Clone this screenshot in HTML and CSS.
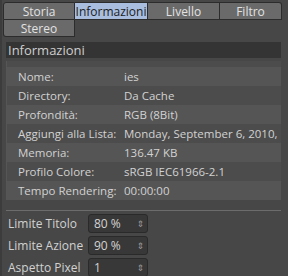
FILE: index.html
```html
<!DOCTYPE html>
<html lang="it">
<head>
    <meta charset="UTF-8">
    <title>Informazioni</title>
    <link rel="stylesheet" href="styles.css">
</head>
<body>

    <!-- Tab strip -->
    <div class="tabs">
        <div class="tab-row">
            <div class="tab first">Storia</div>
            <div class="tab active">Informazioni</div>
            <div class="tab">Livello</div>
            <div class="tab last">Filtro</div>
        </div>
        <div class="tab-row">
            <div class="tab first bottom">Stereo</div>
        </div>
    </div>

    <!-- Panel -->
    <div class="panel">
        <div class="panel-head">Informazioni</div>

        <div class="info">
            <div class="info-row"><span class="key">Nome:</span><span class="val">ies</span></div>
            <div class="info-row"><span class="key">Directory:</span><span class="val">Da Cache</span></div>
            <div class="info-row"><span class="key">Profondità:</span><span class="val">RGB (8Bit)</span></div>
            <div class="info-row"><span class="key">Aggiungi alla Lista:</span><span class="val">Monday, September 6, 2010,</span></div>
            <div class="info-row"><span class="key">Memoria:</span><span class="val">136.47 KB</span></div>
            <div class="info-row"><span class="key">Profilo Colore:</span><span class="val">sRGB IEC61966-2.1</span></div>
            <div class="info-row"><span class="key">Tempo Rendering:</span><span class="val">00:00:00</span></div>
        </div>

        <div class="sep"></div>

        <div class="fields">
            <div class="field">
                <span class="field-label">Limite Titolo</span>
                <div class="spin"><span>80 %</span><span class="arrows">&#8661;</span></div>
            </div>
            <div class="field">
                <span class="field-label">Limite Azione</span>
                <div class="spin"><span>90 %</span><span class="arrows">&#8661;</span></div>
            </div>
            <div class="field">
                <span class="field-label">Aspetto Pixel</span>
                <div class="spin"><span>1</span><span class="arrows">&#8661;</span></div>
            </div>
        </div>
    </div>

</body>
</html>
```

FILE: styles.css
```css
/* Reset */
* {
    margin: 0;
    padding: 0;
    box-sizing: border-box;
}

body {
    font-family: 'Open Sans', 'DejaVu Sans', sans-serif;
    font-size: 11.5px;
    color: #d2d2d2;
    background: #474747;
    border-left: 2px solid #3c3c3c;
    width: 288px;
    height: 276px;
    overflow: hidden;
    white-space: nowrap;
}

/* Tabs */
.tabs {
    padding: 2px 6px 0 1px;
}

.tab-row {
    display: grid;
    grid-template-columns: 72px 73px 72px 62px;
}

.tab {
    height: 18px;
    line-height: 17px;
    text-align: center;
    background: #6a6a6a;
    color: #e2e2e2;
    border: 1px solid #2c2c2c;
    border-left: none;
    font-size: 12px;
}

.tab.first {
    border-left: 1px solid #2c2c2c;
    border-top-left-radius: 3px;
}

.tab.last {
    border-top-right-radius: 3px;
}

.tab.bottom {
    border-top: none;
    border-radius: 0 0 0 3px;
    height: 17px;
}

.tab.active {
    background: #a9bedf;
    color: #1c1c1c;
}

/* Panel */
.panel {
    margin: 5px 7px 0 4px;
}

.panel-head {
    background: #343434;
    height: 16px;
    line-height: 16px;
    padding-left: 2px;
    font-size: 13px;
    color: #cfcfcf;
}

.info {
    margin-top: 3px;
    padding-top: 6px;
    background: #4c4c4c;
    border-left: 1px solid #565656;
    overflow: hidden;
}

.info-row {
    display: flex;
    height: 19px;
    line-height: 19px;
}

.info-row:nth-child(odd) {
    background: #555555;
}

.key {
    flex-shrink: 0;
    width: 117px;
    padding-left: 11px;
}

/* Separator */
.sep {
    margin-top: 10px;
    height: 1px;
    background: #6c6c6c;
}

/* Spinner fields */
.fields {
    display: flex;
    flex-direction: column;
    gap: 3px;
    margin-top: 3px;
}

.field {
    display: flex;
    align-items: center;
    height: 19px;
}

.field-label {
    flex-shrink: 0;
    width: 82px;
    padding-left: 2px;
    font-size: 12px;
}

.spin {
    display: flex;
    justify-content: space-between;
    align-items: center;
    width: 60px;
    height: 19px;
    padding: 0 3px 0 5px;
    background: #383838;
    border: 1px solid #2a2a2a;
    border-radius: 3px;
    font-size: 12px;
}

.arrows {
    font-size: 9px;
    color: #9a9a9a;
}
```
